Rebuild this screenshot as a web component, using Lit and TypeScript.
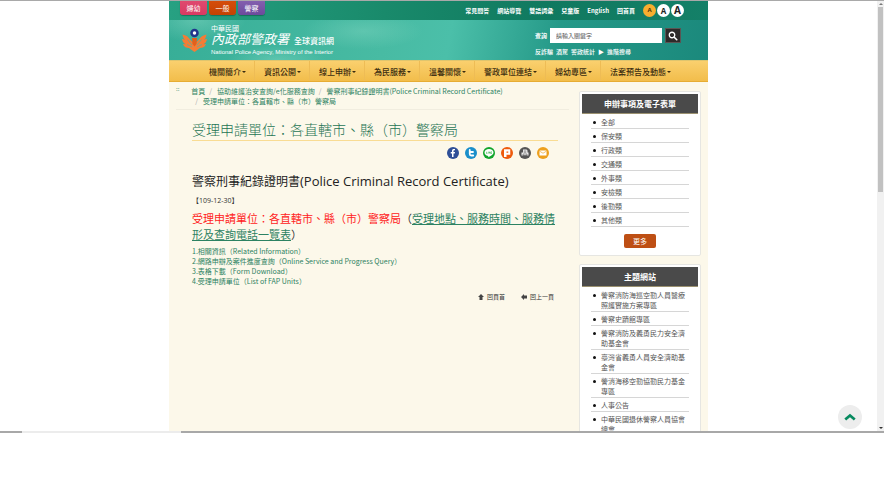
import { LitElement, html, svg, css } from "lit";
import { customElement } from "lit/decorators.js";
import { classMap } from "lit/directives/class-map.js";

const tabs = [
  { text: "婦幼", tone: "pink" },
  { text: "一般", tone: "orange" },
  { text: "警察", tone: "purple" },
];
const utilities = ["常見問答", "網站導覽", "雙語詞彙", "兒童版", "English", "回首頁"];
const menu = ["機關簡介", "資訊公開", "線上申辦", "為民服務", "溫馨關懷", "警政單位連結", "婦幼專區", "法案預告及動態"];
const trail = [
  "首頁",
  "協助維護治安查詢/e化服務查詢",
  "警察刑事紀錄證明書(Police Criminal Record Certificate)",
  "受理申請單位：各直轄市、縣（市）警察局",
];
const related = [
  "1.相關資訊（Related Information）",
  "2.網路申辦及案件進度查詢（Online Service and Progress Query）",
  "3.表格下載（Form Download）",
  "4.受理申請單位（List of FAP Units）",
];
const forms = ["全部", "保安類", "行政類", "交通類", "外事類", "安檢類", "後勤類", "其他類"];
const sites = [
  "警察消防海巡空勤人員醫療照護實施方案專區",
  "警察史蹟館專區",
  "警察消防及義勇民力安全濟助基金會",
  "臺灣省義勇人員安全濟助基金會",
  "警消海移空勤協勤民力基金專區",
  "人事公告",
  "中華民國退休警察人員協會總會",
];

const shares = [
  {
    name: "Facebook",
    color: "#2f4f97",
    art: svg`<path d="M13 20v-7.200h2.600l.4-2.900h-3V8.200c0-.9.4-1.500 1.600-1.500H16V4.200C15.600 4.100 14.800 4 13.800 4 11.500 4 10 5.300 10 7.800v2.100H7.500v2.900H10V20z" fill="#fff"/>`,
  },
  {
    name: "Twitter",
    color: "#1a8fca",
    art: svg`<path d="M9.500 6v8q0 3 3 3h4M9.500 10h6.500" fill="none" stroke="#fff" stroke-width="3.600" stroke-linecap="round"/>`,
  },
  {
    name: "LINE",
    color: "#12a52c",
    art: svg`<path d="M12 4c-5 0-9 3-9 7 0 3.500 3 6.300 7.200 6.900.8.1.3 1.600.2 2.700 2.800-1.300 10.600-5 10.600-9.600C21 7 17 4 12 4z" fill="#fff"/><path d="M7 9.500v3.500h1.800M10.500 9.500v3.500M12.500 13V9.500l2 3.500V9.500M18 9.500h-1.600V13H18" fill="none" stroke="#12a52c" stroke-width="1"/>`,
  },
  {
    name: "Plurk",
    color: "#ee5a0c",
    art: svg`<path d="M6 4.500h12.500v11H11V20H6z" fill="#fff"/><path d="M11 9h3.500v2.500H11z" fill="#ee5a0c"/>`,
  },
  {
    name: "列印",
    color: "#555555",
    art: svg`<path d="M8 5h7l2 2v4h2v6H5v-6h3z" fill="#eee"/><path d="M9.500 8h5M9.500 10.500h5M8 14h8v3H8z" fill="none" stroke="#555" stroke-width="1.200"/>`,
  },
  {
    name: "電子郵件",
    color: "#eda01e",
    art: svg`<rect x="5" y="7" width="14" height="10" rx="1" fill="#fff"/><path d="M5.500 8.500 12 12.500l6.500-4" fill="none" stroke="#eda01e" stroke-width="1.300"/>`,
  },
];

@customElement("site-header")
class SiteHeader extends LitElement {
  static styles = css`
    :host { display: block; }
    a { color: inherit; text-decoration: none; }
    .top {
      display: flex; justify-content: space-between; height: 20px;
      padding: 0 24px 0 11px;
      background: linear-gradient(90deg, #27a182 0%, #198a6b 40%, #10795f 70%, #148068 100%);
    }
    .tabs { display: flex; gap: 2px; }
    .tab {
      width: 27px; height: 15px; border-radius: 0 0 3px 3px;
      color: #fff; font-size: 7px; line-height: 17px; text-align: center;
      box-shadow: 0 1px 1px rgba(0, 60, 40, 0.4);
    }
    .pink { background: linear-gradient(#e04a70, #d83a62); }
    .orange { background: linear-gradient(#d64e0c, #c44303); }
    .purple { background: linear-gradient(#8560b0, #6c4b9c); }
    .tools { display: flex; align-items: center; gap: 8px; padding-top: 1px; color: #fff; font-size: 6px; font-weight: 700; line-height: 10px; }
    .sizes { display: flex; gap: 1px; }
    .size {
      width: 13px; height: 13px; padding: 0; border: 0; border-radius: 50%;
      background: #fff; color: #222; font: 700 8px/13px "Open Sans", sans-serif; text-align: center;
    }
    .small { background: #f7ae2f; color: #4d3206; font-size: 6px; }
    .large { font-size: 10px; }
    .banner {
      display: flex; justify-content: space-between; height: 40px;
      padding: 0 27px 0 13px;
      background:
        radial-gradient(ellipse 50px 22px at 5% 0%, rgba(160, 230, 210, 0.35), transparent),
        radial-gradient(ellipse 60px 18px at 36% 28%, rgba(150, 225, 205, 0.3), transparent),
        radial-gradient(ellipse 50px 14px at 20% 100%, rgba(160, 235, 215, 0.3), transparent),
        linear-gradient(100deg, #37ae97 0%, #48bba3 40%, #4bbfa9 52%, #259988 72%, #1b897c 100%);
    }
    .brand { display: flex; align-items: center; gap: 4px; color: #fff; }
    .emblem { width: 25px; height: 26px; flex: none; }
    .names { display: flex; flex-direction: column; }
    .nation { font-size: 7px; line-height: 8px; }
    .agency { display: flex; align-items: baseline; gap: 5px; font-size: 8px; font-weight: 500; line-height: 14px; }
    .script { font-size: 13px; font-style: italic; font-weight: 400; }
    .english { font: 6px/8px "Liberation Sans", sans-serif; }
    .search { display: grid; grid-template-columns: auto 112px 16px; column-gap: 3px; align-content: start; align-items: center; padding-top: 8px; color: #fff; font-size: 6px; }
    .label { font-weight: 700; }
    .field {
      height: 15px; box-sizing: border-box; padding: 0 6px; border: 0; border-radius: 0;
      background: #fff; color: #333; font: inherit;
    }
    .field::placeholder { color: #555; opacity: 1; }
    .go { display: flex; align-items: center; justify-content: center; width: 16px; height: 15px; padding: 0; border: 1px solid #5a5553; background: #2e2a2a; }
    .lens { width: 10px; height: 10px; }
    .hot { grid-column: 1 / -1; display: flex; gap: 3px; padding-top: 4px; font-weight: 500; line-height: 9px; }
    .menu {
      display: flex; height: 22px; padding: 0 31px;
      border-top: 1px solid #dfc56e; border-bottom: 1px solid #e7ac33; box-sizing: border-box;
      background: linear-gradient(#fad06e, #f2bd4b);
    }
    .entry {
      padding: 0 8px 0 9px; border-right: 1px solid #eebc55;
      color: #3a2c10; font-size: 8px; font-weight: 500; line-height: 21px; white-space: nowrap;
    }
    .entry:last-child { border-right: 0; }
    .entry::after {
      content: ""; display: inline-block; margin-left: 1px; vertical-align: 2px;
      border: 2px solid transparent; border-top-color: currentColor; border-bottom: 0;
    }
  `;

  render() {
    return html`
      <div class="top">
        <div class="tabs">
          ${tabs.map((t) => html`<a href="#" class=${classMap({ tab: true, [t.tone]: true })}>${t.text}</a>`)}
        </div>
        <div class="tools">
          ${utilities.map((t) => html`<a href="#">${t}</a>`)}
          <div class="sizes">
            <button class="size small">A</button><button class="size">A</button><button class="size large">A</button>
          </div>
        </div>
      </div>
      <div class="banner">
        <div class="brand">
          <svg class="emblem" viewBox="0 0 50 52" aria-hidden="true">
            <path d="M1 15c7 1 12 5 16 11l8 8 8-8c4-6 9-10 16-11-1 6-3 9-5 10 3 0 4-1 6-1-1 6-4 9-7 10 2 1 4 0 5 0-2 6-7 8-12 8l-11 8-11-8c-5 0-10-2-12-8 1 0 3 1 5 0-3-1-6-4-7-10 2 0 3 1 6 1-2-1-4-4-5-10z" fill="#f47c35"/>
            <path d="M11 25l9 11M39 25l-9 11M10 35l10 5M40 35l-10 5" stroke="#4db39c" stroke-width="1.500"/>
            <path d="M20 22h10l-1 12-4 5-4-5z" fill="#e2601c"/>
            <circle cx="25" cy="12" r="8.500" fill="#20358c"/>
            <circle cx="25" cy="12" r="3.500" fill="#fff"/>
          </svg>
          <div class="names">
            <span class="nation">中華民國</span>
            <span class="agency"><span class="script">內政部警政署</span>全球資訊網</span>
            <span class="english">National Police Agency, Ministry of the Interior</span>
          </div>
        </div>
        <div class="search">
          <label class="label" for="q">查詢</label>
          <input class="field" id="q" type="text" placeholder="請輸入關鍵字" />
          <button class="go" aria-label="查詢">
            <svg class="lens" viewBox="0 0 20 20"><circle cx="8" cy="8" r="5.500" fill="none" stroke="#fff" stroke-width="2.600"/><path d="M12.500 12.500l5 5" stroke="#fff" stroke-width="3.200" stroke-linecap="round"/></svg>
          </button>
          <div class="hot">
            <a href="#">反詐騙</a><a href="#">酒駕</a><a href="#">警政統計</a><span>▶</span><a href="#">進階搜尋</a>
          </div>
        </div>
      </div>
      <nav class="menu">${menu.map((m) => html`<a href="#" class="entry">${m}</a>`)}</nav>
    `;
  }
}

@customElement("side-panel")
class SidePanel extends LitElement {
  static properties = { heading: {}, items: { attribute: false }, more: { type: Boolean } };
  declare heading: string;
  declare items: string[];
  declare more: boolean;

  static styles = css`
    :host { display: block; padding: 2px; border: 1px solid #e6e6e2; border-radius: 2px; background: #fff; }
    .heading {
      margin: 0; border-bottom: 1px solid #9b9170; background: #4a4a4a; color: #fff;
      font-size: 8px; font-weight: 700; line-height: 19px; text-align: center;
    }
    .list { margin: 0; padding: 1px 9px 0; list-style: none; }
    .item {
      display: flex; padding: 2px 2px 1px; border-bottom: 1px solid #d6d6d6;
      font-size: 7px; line-height: 10px;
    }
    .item::before { content: ""; flex: none; width: 3px; height: 3px; margin: 4px 5px 0 0; border-radius: 50%; background: #111; }
    .link { color: #555; text-decoration: none; }
    .more {
      display: block; width: 32px; height: 14px; margin: 7px auto 5px; padding: 0; border: 0; border-radius: 2px;
      background: #be4f14; color: #fff; font: inherit; font-size: 7px; line-height: 14px;
    }
  `;

  render() {
    return html`
      <h2 class="heading">${this.heading}</h2>
      <ul class="list">
        ${this.items.map((i) => html`<li class="item"><a href="#" class="link">${i}</a></li>`)}
      </ul>
      ${this.more ? html`<button class="more">更多</button>` : ""}
    `;
  }
}

@customElement("site-article")
class SiteArticle extends LitElement {
  static styles = css`
    :host { display: block; color: #333; }
    a { color: #2c8262; }
    .crumbs { display: flex; gap: 12px; margin-right: 10px; padding: 4px 0 3px; border-bottom: 1px solid #f1eddf; }
    .anchor { font-size: 6px; line-height: 6px; text-decoration: none; }
    .trail { display: flex; flex-wrap: wrap; margin: 0; padding: 0; list-style: none; font-size: 7px; line-height: 10px; }
    .trail a { text-decoration: none; }
    .crumb:not(:first-child)::before { content: "/"; padding: 0 5px 0 4px; color: #aaa; }
    .content { padding: 0 21px 0 16px; }
    .title { margin: 9px 0 0; border-bottom: 1px solid #f9dc93; color: #1d7453; font-size: 14px; font-weight: 300; line-height: 21px; }
    .shares { display: flex; justify-content: flex-end; gap: 6px; padding: 6px 9px 0 0; }
    .share { display: block; height: 12px; }
    .badge { display: block; width: 12px; height: 12px; }
    .subject { margin: 13px 0 0; color: #222; font-size: 12px; font-weight: 400; line-height: 18px; }
    .latin { font-family: "Open Sans", sans-serif; font-size: 13px; line-height: 1; }
    .date { margin: 6px 0 0; font-family: "Open Sans", "Noto Sans CJK TC", sans-serif; font-size: 7px; line-height: 10px; }
    .lead { margin: 4px 0; font-size: 11px; line-height: 16px; }
    .red { color: #f22; }
    .related { margin: 0; padding: 0; list-style: none; font-size: 7px; line-height: 10px; }
    .related a { text-decoration: none; }
    .back { display: flex; justify-content: flex-end; gap: 16px; padding: 7px 4px 0 0; font-size: 6px; line-height: 8px; }
    .back a { display: flex; align-items: center; gap: 3px; color: #333; text-decoration: none; }
    .arrow { width: 6px; height: 6px; }
  `;

  render() {
    return html`
      <div class="crumbs">
        <a href="#" class="anchor">::</a>
        <ol class="trail">${trail.map((t) => html`<li class="crumb"><a href="#">${t}</a></li>`)}</ol>
      </div>
      <div class="content">
        <h1 class="title">受理申請單位：各直轄市、縣（市）警察局</h1>
        <div class="shares">
          ${shares.map(
            (s) => html`<a href="#" class="share" aria-label=${s.name}>
              <svg class="badge" viewBox="0 0 24 24"><circle cx="12" cy="12" r="12" fill=${s.color}/>${s.art}</svg>
            </a>`
          )}
        </div>
        <h2 class="subject">警察刑事紀錄證明書<span class="latin">(Police Criminal Record Certificate)</span></h2>
        <p class="date">【109-12-30】</p>
        <p class="lead"><span class="red">受理申請單位：各直轄市、縣（市）警察局</span>（<a href="#">受理地點、服務時間、服務情形及查詢電話一覽表</a>）</p>
        <ul class="related">${related.map((r) => html`<li><a href="#">${r}</a></li>`)}</ul>
        <div class="back">
          <a href="#"><svg class="arrow" viewBox="0 0 12 12"><path d="M6 0l6 6H9v6H3V6H0z" fill="#444"/></svg>回頁首</a>
          <a href="#"><svg class="arrow" viewBox="0 0 12 12"><path d="M0 6l6-6v3h6v6H6v3z" fill="#444"/></svg>回上一頁</a>
        </div>
      </div>
    `;
  }
}

@customElement("app-root")
class AppRoot extends LitElement {
  static styles = css`
    :host {
      display: flex; flex-direction: column; height: 100vh; background: #fff;
      font-family: "Noto Sans CJK TC", sans-serif;
    }
    .frame { position: relative; display: flex; flex: 1; min-height: 0; overflow: hidden; border-top: 1px solid #a9a9a9; box-sizing: border-box; }
    .page { flex: 1; min-width: 0; height: 100%; overflow: hidden; }
    .site { width: 100%; max-width: 539px; min-height: 100%; margin: -1px auto 0; background: #fcf8ea; }
    .columns { display: grid; grid-template-columns: minmax(0, 1fr) 122px; padding: 0 7px; }
    .aside { display: flex; flex-direction: column; gap: 8px; padding-top: 9px; }
    .scroll { display: flex; flex-direction: column; align-items: center; width: 7px; background: #f1f1f1; }
    .thumb { width: 5px; height: 43%; background: #c1c1c1; }
    .tip { border: 2px solid transparent; }
    .up { margin: 2px 0; border-top: 0; border-bottom-color: #777; }
    .down { margin: auto 0 2px; border-bottom: 0; border-top-color: #333; }
    .totop {
      position: absolute; right: 22px; bottom: 2px; display: flex; align-items: center; justify-content: center;
      width: 24px; height: 24px; border-radius: 50%; background: #ededed;
    }
    .chevron { width: 12px; height: 8px; }
    .edge { display: flex; height: 2px; background: #a8a8a8; }
    .pale { width: 18%; margin-left: 22px; background: #ececec; }
    .rest { height: 64px; }
  `;

  render() {
    return html`
      <div class="frame">
        <div class="page">
          <div class="site">
            <site-header></site-header>
            <div class="columns">
              <site-article></site-article>
              <aside class="aside">
                <side-panel heading="申辦事項及電子表單" .items=${forms} more></side-panel>
                <side-panel heading="主題網站" .items=${sites}></side-panel>
              </aside>
            </div>
          </div>
        </div>
        <div class="scroll"><span class="tip up"></span><span class="thumb"></span><span class="tip down"></span></div>
        <a href="#" class="totop" aria-label="回頁首">
          <svg class="chevron" viewBox="0 0 24 16"><path d="M2.500 13 12 5l9.500 8" fill="none" stroke="#078a5f" stroke-width="5.500"/></svg>
        </a>
      </div>
      <div class="edge"><span class="pale"></span></div>
      <div class="rest"></div>
    `;
  }
}
